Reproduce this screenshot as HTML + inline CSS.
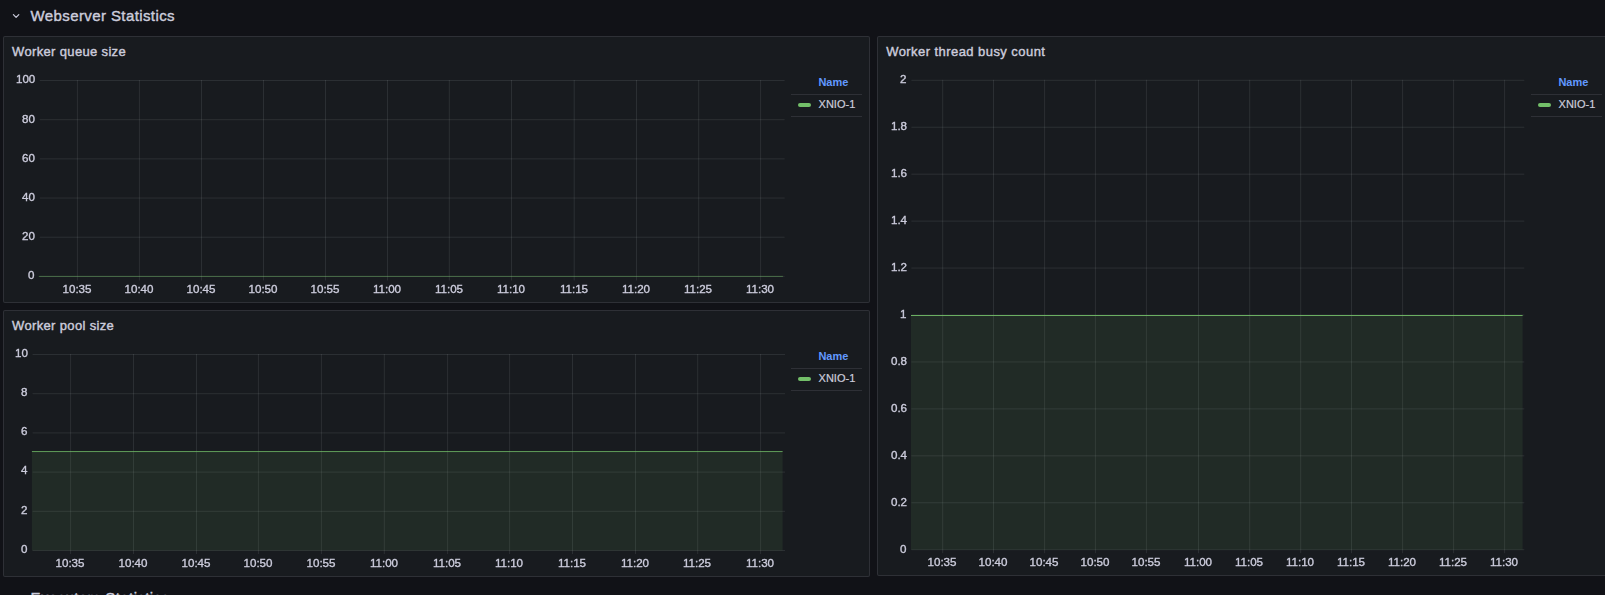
<!DOCTYPE html>
<html><head><meta charset="utf-8"><style>
html,body{margin:0;padding:0;}
body{width:1605px;height:595px;overflow:hidden;background:#111217;position:relative;font-family:"Liberation Sans", sans-serif;}
.t{position:absolute;white-space:nowrap;}
.ax{will-change:transform;}
.panel{position:absolute;box-sizing:border-box;background:#181b1f;border:1px solid rgba(204,204,220,0.12);border-radius:2px;}
svg{position:absolute;left:0;top:0;}
</style></head><body>

<svg width="1605" height="595" style="left:0;top:0" viewBox="0 0 1605 595"><polyline points="13.4,14.6 16.1,17.3 18.8,14.6" fill="none" stroke="#ccccdc" stroke-width="1.2" stroke-linecap="round" stroke-linejoin="round"/></svg>
<div class="t" style="left:30.50px;top:8.34px;font-size:15px;line-height:15px;font-weight:400;color:#ccccdc;-webkit-text-stroke:0.4px #ccccdc;letter-spacing:0.4px">Webserver Statistics</div>
<div class="t" style="left:30.50px;top:590.04px;font-size:15px;line-height:15px;font-weight:400;color:#ccccdc;-webkit-text-stroke:0.4px #ccccdc;letter-spacing:0.4px">Executors Statistics</div>
<div class="panel" style="left:3px;top:36px;width:867px;height:267px"></div>
<div class="panel" style="left:3px;top:310px;width:867px;height:267px"></div>
<div class="panel" style="left:877px;top:36px;width:740px;height:540px"></div>
<div class="t" style="left:12.10px;top:45.37px;font-size:13px;line-height:13px;font-weight:400;color:#ccccdc;-webkit-text-stroke:0.4px #ccccdc;letter-spacing:0.34px">Worker queue size</div>
<div class="t" style="left:12.10px;top:319.37px;font-size:13px;line-height:13px;font-weight:400;color:#ccccdc;-webkit-text-stroke:0.4px #ccccdc;letter-spacing:0.34px">Worker pool size</div>
<div class="t" style="left:886.20px;top:45.37px;font-size:13px;line-height:13px;font-weight:400;color:#ccccdc;-webkit-text-stroke:0.4px #ccccdc;letter-spacing:0.44px">Worker thread busy count</div>
<div class="t" style="left:818.40px;top:76.81px;font-size:11px;line-height:11px;font-weight:700;color:#6299ff;">Name</div>
<div style="position:absolute;left:791px;top:94px;width:71px;height:1px;background:rgba(204,204,220,0.12)"></div>
<div style="position:absolute;left:798px;top:103px;width:13px;height:4px;border-radius:2px;background:#73bf69"></div>
<div class="t" style="left:818.60px;top:99.01px;font-size:11px;line-height:11px;font-weight:400;color:#ccccdc;-webkit-text-stroke:0.2px #ccccdc">XNIO-1</div>
<div style="position:absolute;left:791px;top:116px;width:71px;height:1px;background:rgba(204,204,220,0.12)"></div>
<div class="t" style="left:818.40px;top:350.81px;font-size:11px;line-height:11px;font-weight:700;color:#6299ff;">Name</div>
<div style="position:absolute;left:791px;top:368px;width:71px;height:1px;background:rgba(204,204,220,0.12)"></div>
<div style="position:absolute;left:798px;top:377px;width:13px;height:4px;border-radius:2px;background:#73bf69"></div>
<div class="t" style="left:818.60px;top:373.01px;font-size:11px;line-height:11px;font-weight:400;color:#ccccdc;-webkit-text-stroke:0.2px #ccccdc">XNIO-1</div>
<div style="position:absolute;left:791px;top:390px;width:71px;height:1px;background:rgba(204,204,220,0.12)"></div>
<div class="t" style="left:1558.40px;top:76.81px;font-size:11px;line-height:11px;font-weight:700;color:#6299ff;">Name</div>
<div style="position:absolute;left:1531px;top:94px;width:71px;height:1px;background:rgba(204,204,220,0.12)"></div>
<div style="position:absolute;left:1538px;top:103px;width:13px;height:4px;border-radius:2px;background:#73bf69"></div>
<div class="t" style="left:1558.60px;top:99.01px;font-size:11px;line-height:11px;font-weight:400;color:#ccccdc;-webkit-text-stroke:0.2px #ccccdc">XNIO-1</div>
<div style="position:absolute;left:1531px;top:116px;width:71px;height:1px;background:rgba(204,204,220,0.12)"></div>
<svg width="1605" height="595" viewBox="0 0 1605 595"><rect x="39.75" y="80.00" width="744.85" height="1" fill="rgba(240,250,255,0.09)"/><rect x="39.75" y="119.18" width="744.85" height="1" fill="rgba(240,250,255,0.09)"/><rect x="39.75" y="158.36" width="744.85" height="1" fill="rgba(240,250,255,0.09)"/><rect x="39.75" y="197.54" width="744.85" height="1" fill="rgba(240,250,255,0.09)"/><rect x="39.75" y="236.72" width="744.85" height="1" fill="rgba(240,250,255,0.09)"/><rect x="39.75" y="275.90" width="744.85" height="1" fill="rgba(240,250,255,0.09)"/><rect x="76.90" y="80.00" width="1" height="200.50" fill="rgba(240,250,255,0.09)"/><rect x="138.90" y="80.00" width="1" height="200.50" fill="rgba(240,250,255,0.09)"/><rect x="201.00" y="80.00" width="1" height="200.50" fill="rgba(240,250,255,0.09)"/><rect x="263.00" y="80.00" width="1" height="200.50" fill="rgba(240,250,255,0.09)"/><rect x="325.00" y="80.00" width="1" height="200.50" fill="rgba(240,250,255,0.09)"/><rect x="387.00" y="80.00" width="1" height="200.50" fill="rgba(240,250,255,0.09)"/><rect x="448.80" y="80.00" width="1" height="200.50" fill="rgba(240,250,255,0.09)"/><rect x="511.00" y="80.00" width="1" height="200.50" fill="rgba(240,250,255,0.09)"/><rect x="573.70" y="80.00" width="1" height="200.50" fill="rgba(240,250,255,0.09)"/><rect x="636.00" y="80.00" width="1" height="200.50" fill="rgba(240,250,255,0.09)"/><rect x="698.20" y="80.00" width="1" height="200.50" fill="rgba(240,250,255,0.09)"/><rect x="760.10" y="80.00" width="1" height="200.50" fill="rgba(240,250,255,0.09)"/><rect x="38.80" y="275.90" width="744.10" height="1" fill="rgba(115,191,105,0.45)"/></svg>
<div class="t ax" style="right:1570.15px;top:73.34px;font-size:11.6px;line-height:11.6px;font-weight:400;color:#ccccdc;-webkit-text-stroke:0.35px #ccccdc;letter-spacing:-0.05px">100</div>
<div class="t ax" style="right:1570.15px;top:112.52px;font-size:11.6px;line-height:11.6px;font-weight:400;color:#ccccdc;-webkit-text-stroke:0.35px #ccccdc;letter-spacing:-0.05px">80</div>
<div class="t ax" style="right:1570.15px;top:151.70px;font-size:11.6px;line-height:11.6px;font-weight:400;color:#ccccdc;-webkit-text-stroke:0.35px #ccccdc;letter-spacing:-0.05px">60</div>
<div class="t ax" style="right:1570.15px;top:190.88px;font-size:11.6px;line-height:11.6px;font-weight:400;color:#ccccdc;-webkit-text-stroke:0.35px #ccccdc;letter-spacing:-0.05px">40</div>
<div class="t ax" style="right:1570.15px;top:230.06px;font-size:11.6px;line-height:11.6px;font-weight:400;color:#ccccdc;-webkit-text-stroke:0.35px #ccccdc;letter-spacing:-0.05px">20</div>
<div class="t ax" style="right:1570.15px;top:269.24px;font-size:11.6px;line-height:11.6px;font-weight:400;color:#ccccdc;-webkit-text-stroke:0.35px #ccccdc;letter-spacing:-0.05px">0</div>
<div class="t ax" style="left:47.00px;width:60px;text-align:center;top:283.04px;font-size:11.6px;line-height:11.6px;font-weight:400;color:#ccccdc;-webkit-text-stroke:0.35px #ccccdc;letter-spacing:-0.05px">10:35</div>
<div class="t ax" style="left:109.00px;width:60px;text-align:center;top:283.04px;font-size:11.6px;line-height:11.6px;font-weight:400;color:#ccccdc;-webkit-text-stroke:0.35px #ccccdc;letter-spacing:-0.05px">10:40</div>
<div class="t ax" style="left:171.10px;width:60px;text-align:center;top:283.04px;font-size:11.6px;line-height:11.6px;font-weight:400;color:#ccccdc;-webkit-text-stroke:0.35px #ccccdc;letter-spacing:-0.05px">10:45</div>
<div class="t ax" style="left:233.10px;width:60px;text-align:center;top:283.04px;font-size:11.6px;line-height:11.6px;font-weight:400;color:#ccccdc;-webkit-text-stroke:0.35px #ccccdc;letter-spacing:-0.05px">10:50</div>
<div class="t ax" style="left:295.10px;width:60px;text-align:center;top:283.04px;font-size:11.6px;line-height:11.6px;font-weight:400;color:#ccccdc;-webkit-text-stroke:0.35px #ccccdc;letter-spacing:-0.05px">10:55</div>
<div class="t ax" style="left:357.10px;width:60px;text-align:center;top:283.04px;font-size:11.6px;line-height:11.6px;font-weight:400;color:#ccccdc;-webkit-text-stroke:0.35px #ccccdc;letter-spacing:-0.05px">11:00</div>
<div class="t ax" style="left:418.90px;width:60px;text-align:center;top:283.04px;font-size:11.6px;line-height:11.6px;font-weight:400;color:#ccccdc;-webkit-text-stroke:0.35px #ccccdc;letter-spacing:-0.05px">11:05</div>
<div class="t ax" style="left:481.10px;width:60px;text-align:center;top:283.04px;font-size:11.6px;line-height:11.6px;font-weight:400;color:#ccccdc;-webkit-text-stroke:0.35px #ccccdc;letter-spacing:-0.05px">11:10</div>
<div class="t ax" style="left:543.80px;width:60px;text-align:center;top:283.04px;font-size:11.6px;line-height:11.6px;font-weight:400;color:#ccccdc;-webkit-text-stroke:0.35px #ccccdc;letter-spacing:-0.05px">11:15</div>
<div class="t ax" style="left:606.10px;width:60px;text-align:center;top:283.04px;font-size:11.6px;line-height:11.6px;font-weight:400;color:#ccccdc;-webkit-text-stroke:0.35px #ccccdc;letter-spacing:-0.05px">11:20</div>
<div class="t ax" style="left:668.30px;width:60px;text-align:center;top:283.04px;font-size:11.6px;line-height:11.6px;font-weight:400;color:#ccccdc;-webkit-text-stroke:0.35px #ccccdc;letter-spacing:-0.05px">11:25</div>
<div class="t ax" style="left:730.20px;width:60px;text-align:center;top:283.04px;font-size:11.6px;line-height:11.6px;font-weight:400;color:#ccccdc;-webkit-text-stroke:0.35px #ccccdc;letter-spacing:-0.05px">11:30</div>
<svg width="1605" height="595" viewBox="0 0 1605 595"><rect x="32.60" y="354.00" width="752.40" height="1" fill="rgba(240,250,255,0.09)"/><rect x="32.60" y="393.20" width="752.40" height="1" fill="rgba(240,250,255,0.09)"/><rect x="32.60" y="432.40" width="752.40" height="1" fill="rgba(240,250,255,0.09)"/><rect x="32.60" y="471.60" width="752.40" height="1" fill="rgba(240,250,255,0.09)"/><rect x="32.60" y="510.80" width="752.40" height="1" fill="rgba(240,250,255,0.09)"/><rect x="32.60" y="550.00" width="752.40" height="1" fill="rgba(240,250,255,0.09)"/><rect x="70.10" y="354.00" width="1" height="200.00" fill="rgba(240,250,255,0.09)"/><rect x="133.00" y="354.00" width="1" height="200.00" fill="rgba(240,250,255,0.09)"/><rect x="196.00" y="354.00" width="1" height="200.00" fill="rgba(240,250,255,0.09)"/><rect x="257.90" y="354.00" width="1" height="200.00" fill="rgba(240,250,255,0.09)"/><rect x="320.90" y="354.00" width="1" height="200.00" fill="rgba(240,250,255,0.09)"/><rect x="383.80" y="354.00" width="1" height="200.00" fill="rgba(240,250,255,0.09)"/><rect x="447.10" y="354.00" width="1" height="200.00" fill="rgba(240,250,255,0.09)"/><rect x="509.10" y="354.00" width="1" height="200.00" fill="rgba(240,250,255,0.09)"/><rect x="572.00" y="354.00" width="1" height="200.00" fill="rgba(240,250,255,0.09)"/><rect x="635.00" y="354.00" width="1" height="200.00" fill="rgba(240,250,255,0.09)"/><rect x="697.20" y="354.00" width="1" height="200.00" fill="rgba(240,250,255,0.09)"/><rect x="760.10" y="354.00" width="1" height="200.00" fill="rgba(240,250,255,0.09)"/><rect x="31.90" y="451.55" width="750.70" height="98.95" fill="rgba(115,191,105,0.10)"/><rect x="31.90" y="451.05" width="750.70" height="1" fill="rgba(115,191,105,0.78)"/></svg>
<div class="t ax" style="right:1577.30px;top:346.84px;font-size:11.6px;line-height:11.6px;font-weight:400;color:#ccccdc;-webkit-text-stroke:0.35px #ccccdc;letter-spacing:-0.05px">10</div>
<div class="t ax" style="right:1577.30px;top:386.04px;font-size:11.6px;line-height:11.6px;font-weight:400;color:#ccccdc;-webkit-text-stroke:0.35px #ccccdc;letter-spacing:-0.05px">8</div>
<div class="t ax" style="right:1577.30px;top:425.24px;font-size:11.6px;line-height:11.6px;font-weight:400;color:#ccccdc;-webkit-text-stroke:0.35px #ccccdc;letter-spacing:-0.05px">6</div>
<div class="t ax" style="right:1577.30px;top:464.44px;font-size:11.6px;line-height:11.6px;font-weight:400;color:#ccccdc;-webkit-text-stroke:0.35px #ccccdc;letter-spacing:-0.05px">4</div>
<div class="t ax" style="right:1577.30px;top:503.64px;font-size:11.6px;line-height:11.6px;font-weight:400;color:#ccccdc;-webkit-text-stroke:0.35px #ccccdc;letter-spacing:-0.05px">2</div>
<div class="t ax" style="right:1577.30px;top:542.84px;font-size:11.6px;line-height:11.6px;font-weight:400;color:#ccccdc;-webkit-text-stroke:0.35px #ccccdc;letter-spacing:-0.05px">0</div>
<div class="t ax" style="left:40.20px;width:60px;text-align:center;top:556.84px;font-size:11.6px;line-height:11.6px;font-weight:400;color:#ccccdc;-webkit-text-stroke:0.35px #ccccdc;letter-spacing:-0.05px">10:35</div>
<div class="t ax" style="left:103.10px;width:60px;text-align:center;top:556.84px;font-size:11.6px;line-height:11.6px;font-weight:400;color:#ccccdc;-webkit-text-stroke:0.35px #ccccdc;letter-spacing:-0.05px">10:40</div>
<div class="t ax" style="left:166.10px;width:60px;text-align:center;top:556.84px;font-size:11.6px;line-height:11.6px;font-weight:400;color:#ccccdc;-webkit-text-stroke:0.35px #ccccdc;letter-spacing:-0.05px">10:45</div>
<div class="t ax" style="left:228.00px;width:60px;text-align:center;top:556.84px;font-size:11.6px;line-height:11.6px;font-weight:400;color:#ccccdc;-webkit-text-stroke:0.35px #ccccdc;letter-spacing:-0.05px">10:50</div>
<div class="t ax" style="left:291.00px;width:60px;text-align:center;top:556.84px;font-size:11.6px;line-height:11.6px;font-weight:400;color:#ccccdc;-webkit-text-stroke:0.35px #ccccdc;letter-spacing:-0.05px">10:55</div>
<div class="t ax" style="left:353.90px;width:60px;text-align:center;top:556.84px;font-size:11.6px;line-height:11.6px;font-weight:400;color:#ccccdc;-webkit-text-stroke:0.35px #ccccdc;letter-spacing:-0.05px">11:00</div>
<div class="t ax" style="left:417.20px;width:60px;text-align:center;top:556.84px;font-size:11.6px;line-height:11.6px;font-weight:400;color:#ccccdc;-webkit-text-stroke:0.35px #ccccdc;letter-spacing:-0.05px">11:05</div>
<div class="t ax" style="left:479.20px;width:60px;text-align:center;top:556.84px;font-size:11.6px;line-height:11.6px;font-weight:400;color:#ccccdc;-webkit-text-stroke:0.35px #ccccdc;letter-spacing:-0.05px">11:10</div>
<div class="t ax" style="left:542.10px;width:60px;text-align:center;top:556.84px;font-size:11.6px;line-height:11.6px;font-weight:400;color:#ccccdc;-webkit-text-stroke:0.35px #ccccdc;letter-spacing:-0.05px">11:15</div>
<div class="t ax" style="left:605.10px;width:60px;text-align:center;top:556.84px;font-size:11.6px;line-height:11.6px;font-weight:400;color:#ccccdc;-webkit-text-stroke:0.35px #ccccdc;letter-spacing:-0.05px">11:20</div>
<div class="t ax" style="left:667.30px;width:60px;text-align:center;top:556.84px;font-size:11.6px;line-height:11.6px;font-weight:400;color:#ccccdc;-webkit-text-stroke:0.35px #ccccdc;letter-spacing:-0.05px">11:25</div>
<div class="t ax" style="left:730.20px;width:60px;text-align:center;top:556.84px;font-size:11.6px;line-height:11.6px;font-weight:400;color:#ccccdc;-webkit-text-stroke:0.35px #ccccdc;letter-spacing:-0.05px">11:30</div>
<svg width="1605" height="595" viewBox="0 0 1605 595"><rect x="911.40" y="79.80" width="612.90" height="1" fill="rgba(240,250,255,0.09)"/><rect x="911.40" y="126.74" width="612.90" height="1" fill="rgba(240,250,255,0.09)"/><rect x="911.40" y="173.68" width="612.90" height="1" fill="rgba(240,250,255,0.09)"/><rect x="911.40" y="220.62" width="612.90" height="1" fill="rgba(240,250,255,0.09)"/><rect x="911.40" y="267.56" width="612.90" height="1" fill="rgba(240,250,255,0.09)"/><rect x="911.40" y="314.50" width="612.90" height="1" fill="rgba(240,250,255,0.09)"/><rect x="911.40" y="361.44" width="612.90" height="1" fill="rgba(240,250,255,0.09)"/><rect x="911.40" y="408.38" width="612.90" height="1" fill="rgba(240,250,255,0.09)"/><rect x="911.40" y="455.32" width="612.90" height="1" fill="rgba(240,250,255,0.09)"/><rect x="911.40" y="502.26" width="612.90" height="1" fill="rgba(240,250,255,0.09)"/><rect x="911.40" y="549.20" width="612.90" height="1" fill="rgba(240,250,255,0.09)"/><rect x="942.20" y="79.80" width="1" height="473.40" fill="rgba(240,250,255,0.09)"/><rect x="993.00" y="79.80" width="1" height="473.40" fill="rgba(240,250,255,0.09)"/><rect x="1044.10" y="79.80" width="1" height="473.40" fill="rgba(240,250,255,0.09)"/><rect x="1094.90" y="79.80" width="1" height="473.40" fill="rgba(240,250,255,0.09)"/><rect x="1145.90" y="79.80" width="1" height="473.40" fill="rgba(240,250,255,0.09)"/><rect x="1198.00" y="79.80" width="1" height="473.40" fill="rgba(240,250,255,0.09)"/><rect x="1249.20" y="79.80" width="1" height="473.40" fill="rgba(240,250,255,0.09)"/><rect x="1300.20" y="79.80" width="1" height="473.40" fill="rgba(240,250,255,0.09)"/><rect x="1351.00" y="79.80" width="1" height="473.40" fill="rgba(240,250,255,0.09)"/><rect x="1402.10" y="79.80" width="1" height="473.40" fill="rgba(240,250,255,0.09)"/><rect x="1453.10" y="79.80" width="1" height="473.40" fill="rgba(240,250,255,0.09)"/><rect x="1504.10" y="79.80" width="1" height="473.40" fill="rgba(240,250,255,0.09)"/><rect x="911.00" y="315.50" width="611.60" height="234.20" fill="rgba(115,191,105,0.10)"/><rect x="911.00" y="315.00" width="611.60" height="1" fill="rgba(115,191,105,0.9)"/></svg>
<div class="t ax" style="right:698.50px;top:73.44px;font-size:11.6px;line-height:11.6px;font-weight:400;color:#ccccdc;-webkit-text-stroke:0.35px #ccccdc;letter-spacing:-0.05px">2</div>
<div class="t ax" style="right:698.50px;top:120.38px;font-size:11.6px;line-height:11.6px;font-weight:400;color:#ccccdc;-webkit-text-stroke:0.35px #ccccdc;letter-spacing:-0.05px">1.8</div>
<div class="t ax" style="right:698.50px;top:167.32px;font-size:11.6px;line-height:11.6px;font-weight:400;color:#ccccdc;-webkit-text-stroke:0.35px #ccccdc;letter-spacing:-0.05px">1.6</div>
<div class="t ax" style="right:698.50px;top:214.26px;font-size:11.6px;line-height:11.6px;font-weight:400;color:#ccccdc;-webkit-text-stroke:0.35px #ccccdc;letter-spacing:-0.05px">1.4</div>
<div class="t ax" style="right:698.50px;top:261.20px;font-size:11.6px;line-height:11.6px;font-weight:400;color:#ccccdc;-webkit-text-stroke:0.35px #ccccdc;letter-spacing:-0.05px">1.2</div>
<div class="t ax" style="right:698.50px;top:308.14px;font-size:11.6px;line-height:11.6px;font-weight:400;color:#ccccdc;-webkit-text-stroke:0.35px #ccccdc;letter-spacing:-0.05px">1</div>
<div class="t ax" style="right:698.50px;top:355.08px;font-size:11.6px;line-height:11.6px;font-weight:400;color:#ccccdc;-webkit-text-stroke:0.35px #ccccdc;letter-spacing:-0.05px">0.8</div>
<div class="t ax" style="right:698.50px;top:402.02px;font-size:11.6px;line-height:11.6px;font-weight:400;color:#ccccdc;-webkit-text-stroke:0.35px #ccccdc;letter-spacing:-0.05px">0.6</div>
<div class="t ax" style="right:698.50px;top:448.96px;font-size:11.6px;line-height:11.6px;font-weight:400;color:#ccccdc;-webkit-text-stroke:0.35px #ccccdc;letter-spacing:-0.05px">0.4</div>
<div class="t ax" style="right:698.50px;top:495.90px;font-size:11.6px;line-height:11.6px;font-weight:400;color:#ccccdc;-webkit-text-stroke:0.35px #ccccdc;letter-spacing:-0.05px">0.2</div>
<div class="t ax" style="right:698.50px;top:542.84px;font-size:11.6px;line-height:11.6px;font-weight:400;color:#ccccdc;-webkit-text-stroke:0.35px #ccccdc;letter-spacing:-0.05px">0</div>
<div class="t ax" style="left:912.30px;width:60px;text-align:center;top:556.04px;font-size:11.6px;line-height:11.6px;font-weight:400;color:#ccccdc;-webkit-text-stroke:0.35px #ccccdc;letter-spacing:-0.05px">10:35</div>
<div class="t ax" style="left:963.10px;width:60px;text-align:center;top:556.04px;font-size:11.6px;line-height:11.6px;font-weight:400;color:#ccccdc;-webkit-text-stroke:0.35px #ccccdc;letter-spacing:-0.05px">10:40</div>
<div class="t ax" style="left:1014.20px;width:60px;text-align:center;top:556.04px;font-size:11.6px;line-height:11.6px;font-weight:400;color:#ccccdc;-webkit-text-stroke:0.35px #ccccdc;letter-spacing:-0.05px">10:45</div>
<div class="t ax" style="left:1065.00px;width:60px;text-align:center;top:556.04px;font-size:11.6px;line-height:11.6px;font-weight:400;color:#ccccdc;-webkit-text-stroke:0.35px #ccccdc;letter-spacing:-0.05px">10:50</div>
<div class="t ax" style="left:1116.00px;width:60px;text-align:center;top:556.04px;font-size:11.6px;line-height:11.6px;font-weight:400;color:#ccccdc;-webkit-text-stroke:0.35px #ccccdc;letter-spacing:-0.05px">10:55</div>
<div class="t ax" style="left:1168.10px;width:60px;text-align:center;top:556.04px;font-size:11.6px;line-height:11.6px;font-weight:400;color:#ccccdc;-webkit-text-stroke:0.35px #ccccdc;letter-spacing:-0.05px">11:00</div>
<div class="t ax" style="left:1219.30px;width:60px;text-align:center;top:556.04px;font-size:11.6px;line-height:11.6px;font-weight:400;color:#ccccdc;-webkit-text-stroke:0.35px #ccccdc;letter-spacing:-0.05px">11:05</div>
<div class="t ax" style="left:1270.30px;width:60px;text-align:center;top:556.04px;font-size:11.6px;line-height:11.6px;font-weight:400;color:#ccccdc;-webkit-text-stroke:0.35px #ccccdc;letter-spacing:-0.05px">11:10</div>
<div class="t ax" style="left:1321.10px;width:60px;text-align:center;top:556.04px;font-size:11.6px;line-height:11.6px;font-weight:400;color:#ccccdc;-webkit-text-stroke:0.35px #ccccdc;letter-spacing:-0.05px">11:15</div>
<div class="t ax" style="left:1372.20px;width:60px;text-align:center;top:556.04px;font-size:11.6px;line-height:11.6px;font-weight:400;color:#ccccdc;-webkit-text-stroke:0.35px #ccccdc;letter-spacing:-0.05px">11:20</div>
<div class="t ax" style="left:1423.20px;width:60px;text-align:center;top:556.04px;font-size:11.6px;line-height:11.6px;font-weight:400;color:#ccccdc;-webkit-text-stroke:0.35px #ccccdc;letter-spacing:-0.05px">11:25</div>
<div class="t ax" style="left:1474.20px;width:60px;text-align:center;top:556.04px;font-size:11.6px;line-height:11.6px;font-weight:400;color:#ccccdc;-webkit-text-stroke:0.35px #ccccdc;letter-spacing:-0.05px">11:30</div>
</body></html>
